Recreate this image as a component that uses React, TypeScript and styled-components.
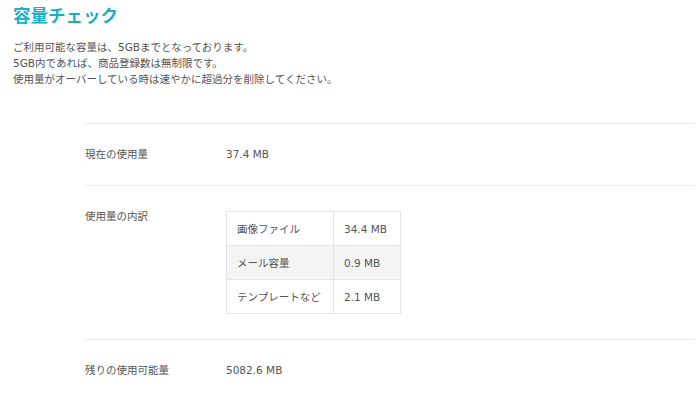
import React from "react";
import styled, { createGlobalStyle } from "styled-components";

const Global = createGlobalStyle`
  html, body { margin: 0; padding: 0; background: #fff; }
  body {
    font-family: "DejaVu Sans", "Noto Sans CJK JP", sans-serif;
    color: #555;
    -webkit-font-smoothing: antialiased;
  }
`;

const Page = styled.div`
  padding: 2px 5px 0 13px;
`;

const Title = styled.h1`
  margin: 0;
  font-family: "Noto Sans CJK JP", sans-serif;
  font-size: 17.5px;
  line-height: 26px;
  font-weight: 700;
  color: #1aafc6;
`;

const Intro = styled.p`
  margin: 11px 0 0;
  font-size: 10.5px;
  line-height: 16px;
`;

const Sheet = styled.div`
  margin: 36px 0 0 72px;
  border-top: 1px solid #ececec;
`;

const Row = styled.div<{ $last?: boolean }>`
  display: grid;
  grid-template-columns: 141px 1fr;
  align-items: start;
  padding: 22px 0 ${(p) => (p.$last ? "40px" : "23px")};
  border-bottom: 1px solid #ececec;
`;

const Label = styled.div`
  font-size: 10.5px;
  line-height: 16px;
`;

const Value = styled.div`
  font-size: 10.5px;
  line-height: 16px;
`;

const Table = styled.table`
  margin: 3px 0 2px;
  width: 175px;
  border-collapse: collapse;
  font-size: 10.5px;
`;

const Tr = styled.tr<{ $shade?: boolean }>`
  background: ${(p) => (p.$shade ? "#f4f4f4" : "#fff")};
`;

const Td = styled.td<{ $w?: number }>`
  border: 1px solid #e4e4e4;
  height: 34px;
  box-sizing: border-box;
  padding: 0 10px;
  line-height: 16px;
  white-space: nowrap;
  width: ${(p) => (p.$w ? `${p.$w}px` : "auto")};
`;

const breakdown = [
  { name: "画像ファイル", size: "34.4 MB" },
  { name: "メール容量", size: "0.9 MB" },
  { name: "テンプレートなど", size: "2.1 MB" },
];

export default function App() {
  return (
    <>
      <Global />
      <Page>
        <Title>容量チェック</Title>
        <Intro>
          ご利用可能な容量は、5GBまでとなっております。
          <br />
          5GB内であれば、商品登録数は無制限です。
          <br />
          使用量がオーバーしている時は速やかに超過分を削除してください。
        </Intro>
        <Sheet>
          <Row>
            <Label>現在の使用量</Label>
            <Value>37.4 MB</Value>
          </Row>
          <Row>
            <Label>使用量の内訳</Label>
            <Table>
              <tbody>
                {breakdown.map((b, i) => (
                  <Tr key={b.name} $shade={i === 1}>
                    <Td $w={107}>{b.name}</Td>
                    <Td>{b.size}</Td>
                  </Tr>
                ))}
              </tbody>
            </Table>
          </Row>
          <Row $last>
            <Label>残りの使用可能量</Label>
            <Value>5082.6 MB</Value>
          </Row>
        </Sheet>
      </Page>
    </>
  );
}
